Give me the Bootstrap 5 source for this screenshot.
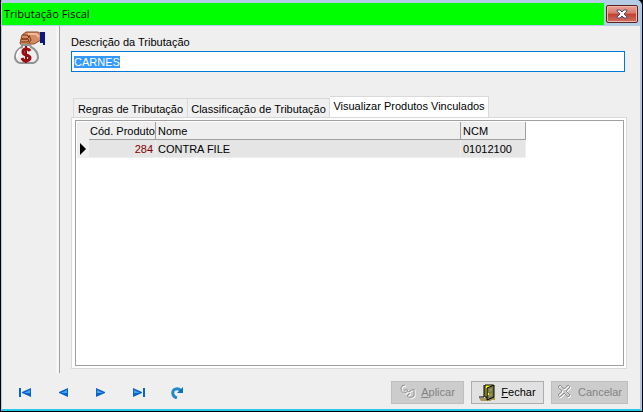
<!DOCTYPE html>
<html lang="pt-BR">
<head>
<meta charset="utf-8">
<meta name="viewport" content="width=device-width, initial-scale=1">
<title>Tributação Fiscal</title>
<link rel="stylesheet" href="https://cdn.jsdelivr.net/npm/bootstrap@5.3.0/dist/css/bootstrap.min.css">
<style>
body{font:11px/16px "Liberation Sans",sans-serif;color:#000;background:#000;overflow:hidden}
.win{background:#efefef;border:1px solid #a9cfe8;border-top:3px solid #b4cce4;border-right:2px solid #a4c8e8;border-bottom:2px solid #28c8ea;border-top-right-radius:5px;margin:0 1px 1px 1px}
.titlebar{background:#b4cce4;height:23px;border-bottom:1px solid #b4cce4}
.caption{background:#0f0;font:11px/22px "Open Sans","Noto Sans",sans-serif;padding-left:2px;margin:0}
.closebtn{width:32px;height:18px;margin:2px 2px 0;padding:0;border:1px solid #5a2420;border-radius:2px;background:linear-gradient(#eba598 0,#d9796b 45%,#c0402e 50%,#cf7062 100%);box-shadow:inset 0 0 0 1px #efb5aa}
.side{width:58px;border-right:1px solid #a0a0a0;padding:5px 0 0 12px;box-shadow:inset -3px 0 0 #f6f6f6}
.content-pane{padding:8px 13px 4px 11px}
.field{height:21px;border:1px solid #0078d7;border-radius:0;padding:0 2px;font:inherit;color:#000;background:#fff;outline:0}
.field::selection{background:#3399ff;color:#fff}
.field-row{padding:1px 2px 0 0}
.tabs{margin:24px 0 0 2px;height:21px}
.tabbtn{height:19px;padding:1px 0 0;border:1px solid #d9d9d9;border-left-width:0;border-bottom:0;background:#f0f0f0;font:inherit;color:#000;text-align:center;white-space:nowrap}
.tab-a{width:115px;border-left-width:1px}.tab-b{width:142px}
.tabbtn.on{width:159px;height:21px;background:#fff;padding:0 0 2px}
.page{background:#fff;border:1px solid #d9d9d9;padding:2px 2px 2px 3px}
.gridbox{border:1px solid #a0a0a0;background:#fff;padding:1px}
.grid{border-collapse:separate;border-spacing:0;table-layout:fixed;width:449px;line-height:16px}
.grid th{font-weight:400;height:18px;padding:0 1px;background:#efefef;border-right:1px solid #a0a0a0;border-bottom:1px solid #a0a0a0;white-space:nowrap}
.grid th+th+th{padding-left:2px}
.grid th.blank{border-color:#efefef}
.grid td{height:18px;padding:0 2px 0 2px;background:#e5e5e5;border-right:1px solid #efefef;border-bottom:1px solid #efefef}
.grid td.mark-cell{background:#efefef;padding:0 0 0 2px}
.grid td.code{color:#800000;text-align:right}
.c0{width:12px}.c1{width:67px}.c2{width:305px}.c3{width:65px}
.foot{height:36px;padding:2px 12px 0 17px}
.navb{background:none;border:0;padding:0;width:13px;height:13px;line-height:0}
.movers{gap:25px}
.act{width:73px;height:23px;border:1px solid #adadad;background:#e1e1e1;padding:0;font:inherit;color:#000;gap:5px}
.act:disabled{background:#ccc;border-color:#bfbfbf;color:#838383}
.act.wide{width:77px}
.actions{gap:7px}
svg{display:block;flex:none}
</style>
<script src="https://cdn.jsdelivr.net/npm/bootstrap@5.3.0/dist/js/bootstrap.bundle.min.js"></script>
</head>
<body class="d-flex flex-column vh-100">
<main class="win d-flex flex-column flex-grow-1">
  <header class="titlebar d-flex">
    <h1 class="caption flex-grow-1">Tributação Fiscal</h1>
    <button class="closebtn d-flex align-items-center justify-content-center" type="button" aria-label="Fechar janela">
      <svg width="12" height="10" viewBox="0 0 12 10"><path d="M1 1h3l2 2 2-2h3v1L8 5l3 3v1H8L6 7 4 9H1V8l3-3-3-3z" fill="#fff" stroke="#4a5068"/></svg>
    </button>
  </header>
  <div class="d-flex flex-grow-1">
    <aside class="side">
      <svg width="32" height="34" viewBox="0 0 32 34">
        <path d="M8 4 12 1H24L27 3V9L20 13H13L11 15H8L6 12z" fill="#d28b62" stroke="#8a4a28"/>
        <path d="M9 4h4l2 2-2 2H8M7 8h7l1 2-2 1H7M15 4l2 5-2 3" fill="none" stroke="#7b3513"/>
        <path d="M14 3h8l3 3" fill="none" stroke="#efbc99" stroke-width="2"/>
        <path d="M26 1h5v13h-2v-2h-3z" fill="#0a1a80"/>
        <path d="M8 14h8l1 2c4 2 7 6 7 11q-1 4-5 5H6q-4-1-5-5c0-5 3-9 7-11z" fill="#efefef" stroke="#929292" stroke-width="2"/>
        <path d="M7 18c-3 2-4 5-4 8" fill="none" stroke="#fff" stroke-width="2"/>
        <path d="M16 20q-1-2-4-2-3 0-3 3 0 2 3 3 4 1 4 3t-4 3q-3 0-4-3" fill="none" stroke="#980d0d" stroke-width="3"/><path d="M12 15v17" stroke="#980d0d" stroke-width="2"/>
      </svg>
    </aside>
    <section class="content-pane d-flex flex-column flex-grow-1">
      <label for="descricao">Descrição da Tributação</label>
      <div class="field-row d-flex"><input class="field flex-grow-1" id="descricao" type="text" value="CARNES" autofocus></div>
      <div class="tabs d-flex align-items-end" role="tablist">
        <button class="tabbtn tab-a" type="button" role="tab" aria-selected="false">Regras de Tributação</button>
        <button class="tabbtn tab-b" type="button" role="tab" aria-selected="false">Classificação de Tributação</button>
        <button class="tabbtn on" type="button" role="tab" aria-selected="true">Visualizar Produtos Vinculados</button>
      </div>
      <div class="page d-flex flex-grow-1" role="tabpanel">
        <div class="gridbox flex-grow-1">
          <table class="grid">
            <colgroup><col class="c0"><col class="c1"><col class="c2"><col class="c3"></colgroup>
            <thead><tr><th class="blank"></th><th>Cód. Produto</th><th>Nome</th><th>NCM</th></tr></thead>
            <tbody><tr><td class="mark-cell"><svg width="7" height="12" viewBox="0 0 7 12"><path d="M1 0 7 6 1 12z"/></svg></td><td class="code">284</td><td>CONTRA FILE</td><td>01012100</td></tr></tbody>
          </table>
        </div>
      </div>
    </section>
  </div>
  <footer class="foot d-flex align-items-center justify-content-between">
    <nav class="movers d-flex" aria-label="Registros">
      <button class="navb" type="button" aria-label="Primeiro"><svg width="13" height="13" viewBox="0 0 13 13"><path d="M0 2h2v9H0zM12 2v9L3 7V6z" fill="#0b62c9"/><path d="M11 4v3H5z" fill="#43a5f5"/></svg></button>
      <button class="navb" type="button" aria-label="Anterior"><svg width="13" height="13" viewBox="0 0 13 13"><path d="M11 2v9L2 7V6z" fill="#0b62c9"/><path d="M10 4v3H4z" fill="#43a5f5"/></svg></button>
      <button class="navb" type="button" aria-label="Próximo"><svg width="13" height="13" viewBox="0 0 13 13"><path d="M1 2v9l9-4V6z" fill="#0b62c9"/><path d="M2 4v3h6z" fill="#43a5f5"/></svg></button>
      <button class="navb" type="button" aria-label="Último"><svg width="13" height="13" viewBox="0 0 13 13"><path d="M10 2h2v9h-2zM0 2v9l9-4V6z" fill="#0b62c9"/><path d="M1 4v3h6z" fill="#43a5f5"/></svg></button>
      <button class="navb" type="button" aria-label="Atualizar"><svg width="13" height="13" viewBox="0 0 13 13"><path d="M6 12C0 10 1 3 5 3q3-1 5 2" fill="none" stroke="#2389c8" stroke-width="3"/><path d="M12 1v6H6z" fill="#0b6fb9"/></svg></button>
    </nav>
    <div class="actions d-flex">
      <button class="act d-flex align-items-center justify-content-center" type="button" disabled>
        <svg width="16" height="16" viewBox="0 0 16 16" fill="none"><g stroke="#fff"><path d="M6 2Q2 2 2 5q0 5 4 5l3-2M5 7h4M9 9l6-3v7l-4 2-3-2 3-3"/></g><g stroke="#949494"><path d="M5 1Q1 1 1 4q0 5 4 5l3-2M4 6h4M8 8l6-3v7l-4 2-3-2 3-3"/></g></svg>
        <span><u>A</u>plicar</span></button>
      <button class="act d-flex align-items-center justify-content-center" type="button">
        <svg width="17" height="17" viewBox="0 0 17 17"><path d="M0 14h7v-1h9v3h-4v1H2z" fill="#a89850"/><path d="M6 1h8v12H6z" fill="#ff0" stroke="#000"/><path d="M0 13h5V1" fill="none" stroke="#000"/><path d="M8 4l7-3v12l-7 3z" fill="#77774a" stroke="#000"/><path d="M10 5l3-1v3l-3 1zM10 10l3-1v3l-3 1z" fill="#929260"/><path d="M9 9h1v2H9z" fill="#ff0"/></svg>
        <span><u>F</u>echar</span></button>
      <button class="act wide d-flex align-items-center justify-content-center" type="button" disabled>
        <svg width="16" height="16" viewBox="0 0 16 16" fill="none"><path d="M2 4l2-2 4 4 4-4 2 2-4 4 4 4-2 2-4-4-4 4-2-2 4-4z" stroke="#fff"/><path d="M1 3l2-2 4 4 4-4 2 2-4 4 4 4-2 2-4-4-4 4-2-2 4-4z" stroke="#949494"/></svg>
        <span>Cancelar</span></button>
    </div>
  </footer>
</main>
<script>document.getElementById('descricao').select();</script>
</body>
</html>
